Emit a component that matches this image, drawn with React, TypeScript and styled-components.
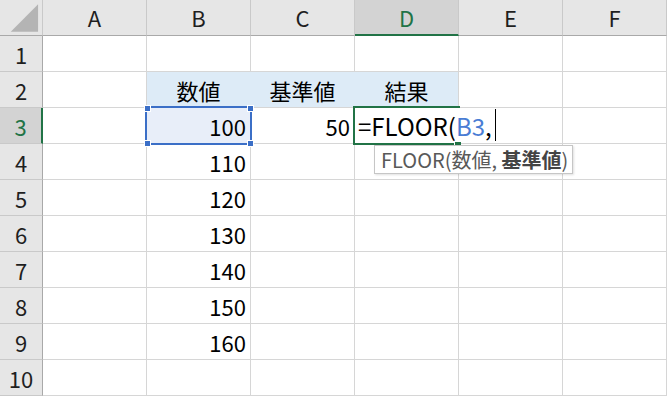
import React from 'react';
import styled, { createGlobalStyle, css } from 'styled-components';

const GlobalStyle = createGlobalStyle`
  html, body {
    margin: 0;
    padding: 0;
    background: #ffffff;
  }
  body {
    font-family: "Noto Sans CJK JP", "Noto Sans", sans-serif;
    overflow: hidden;
  }
`;

const COLS = ['A', 'B', 'C', 'D', 'E', 'F'];
const ROW_COUNT = 10;
const GREEN = '#217346';
const BLUE = '#3b6fc7';
const GRID = '#d6d6d6';
const HEADER_BG = '#e6e6e6';
const HEADER_ACTIVE_BG = '#d3d3d3';
const HEADER_EDGE = '#a9a9a9';
const HEADER_SEP = '#c9c9c9';
const LABEL_FILL = '#ddebf7';
const REF_FILL = '#e8eef9';

type Align = 'left' | 'center' | 'right';

interface CellData {
  text: string;
  align: Align;
}

const cells: Record<string, CellData> = {
  B2: { text: '数値', align: 'center' },
  C2: { text: '基準値', align: 'center' },
  D2: { text: '結果', align: 'center' },
  B3: { text: '100', align: 'right' },
  C3: { text: '50', align: 'right' },
  B4: { text: '110', align: 'right' },
  B5: { text: '120', align: 'right' },
  B6: { text: '130', align: 'right' },
  B7: { text: '140', align: 'right' },
  B8: { text: '150', align: 'right' },
  B9: { text: '160', align: 'right' },
};

// cells with a background fill; internal gridlines between them are hidden
const fills: Record<string, string> = {
  B2: LABEL_FILL,
  C2: LABEL_FILL,
  D2: LABEL_FILL,
  B3: REF_FILL,
};

const Sheet = styled.div`
  position: relative;
  display: grid;
  grid-template-columns: 43px repeat(6, 104px);
  grid-auto-rows: 36px;
  width: 667px;
  height: 396px;
  overflow: hidden;
  background: #ffffff;
  font-size: 22px;
  color: #000000;
`;

const Corner = styled.div`
  box-sizing: border-box;
  background: ${HEADER_BG};
  border-right: 1px solid ${HEADER_SEP};
  border-bottom: 1px solid ${HEADER_EDGE};
  display: flex;
`;

const ColHeader = styled.div<{ $active?: boolean }>`
  box-sizing: border-box;
  display: flex;
  align-items: center;
  justify-content: center;
  background: ${HEADER_BG};
  border-right: 1px solid ${HEADER_SEP};
  border-bottom: 1px solid ${HEADER_EDGE};
  color: #1f1f1f;
  padding-bottom: 1px;
  ${(p) =>
    p.$active &&
    css`
      background: ${HEADER_ACTIVE_BG};
      border-bottom: 2px solid ${GREEN};
      color: ${GREEN};
    `}
`;

const RowHeader = styled.div<{ $active?: boolean }>`
  box-sizing: border-box;
  display: flex;
  align-items: center;
  justify-content: center;
  background: ${HEADER_BG};
  border-right: 1px solid ${HEADER_EDGE};
  border-bottom: 1px solid ${HEADER_SEP};
  color: #1f1f1f;
  ${(p) =>
    p.$active &&
    css`
      background: ${HEADER_ACTIVE_BG};
      border-right: 2px solid ${GREEN};
      color: ${GREEN};
    `}
`;

const Cell = styled.div<{ $align: Align; $fill?: string; $joinRight?: boolean }>`
  box-sizing: border-box;
  display: flex;
  align-items: center;
  justify-content: ${(p) =>
    p.$align === 'right' ? 'flex-end' : p.$align === 'center' ? 'center' : 'flex-start'};
  padding: 0 4px 0 4px;
  background: ${(p) => p.$fill ?? '#ffffff'};
  border-right: 1px solid ${(p) => (p.$joinRight && p.$fill ? p.$fill : GRID)};
  border-bottom: 1px solid ${GRID};
  white-space: nowrap;
`;

/* selection overlays: reference range (blue), active cell with in-cell editor (green) */

const RefRange = styled.div`
  position: absolute;
  left: 145px;
  top: 106px;
  width: 107px;
  height: 39px;
  box-sizing: border-box;
  border: 2px solid ${BLUE};
  pointer-events: none;
`;

const RefHandle = styled.span<{ $right?: boolean; $bottom?: boolean }>`
  position: absolute;
  width: 7px;
  height: 7px;
  box-sizing: border-box;
  background: ${BLUE};
  border: 1px solid #ffffff;
  ${(p) => (p.$right ? 'right: -4px;' : 'left: -3px;')}
  ${(p) => (p.$bottom ? 'bottom: -4px;' : 'top: -3px;')}
`;

const ActiveCell = styled.div`
  position: absolute;
  left: 353px;
  top: 106px;
  width: 107px;
  height: 39px;
  box-sizing: border-box;
  border: 2px solid ${GREEN};
  border-right: none;
`;

const FillHandle = styled.span`
  position: absolute;
  right: -1px;
  bottom: -2px;
  width: 7px;
  height: 6px;
  box-sizing: border-box;
  background: ${GREEN};
  border-left: 1px solid #ffffff;
  border-top: 1px solid #ffffff;
`;

const Editor = styled.div`
  position: absolute;
  left: 355px;
  top: 108px;
  height: 34px;
  box-sizing: border-box;
  display: flex;
  align-items: center;
  padding: 0 6px 0 3px;
  background: #ffffff;
  font-size: 24px;
  color: #000000;
  white-space: nowrap;
`;

const RefText = styled.span`
  color: #4a7dd4;
`;

const Caret = styled.span`
  display: inline-block;
  width: 1px;
  height: 32px;
  margin-left: 3px;
  background: #000000;
`;

const Tip = styled.div`
  position: absolute;
  left: 374px;
  top: 145px;
  width: 199px;
  height: 29px;
  box-sizing: border-box;
  display: flex;
  align-items: center;
  padding: 0 6px;
  background: #ffffff;
  border: 1px solid #c6c6c6;
  box-shadow: 1px 1px 2px rgba(0, 0, 0, 0.12);
  font-size: 20px;
  color: #595959;
  white-space: pre;
`;

const TipArg = styled.b`
  font-weight: 700;
  color: #444444;
`;

export default function App() {
  const rows = Array.from({ length: ROW_COUNT }, (_, i) => i + 1);

  return (
    <>
      <GlobalStyle />
      <Sheet>
        <Corner>
          <svg width="43" height="36" viewBox="0 0 43 36">
            <polygon points="11,32 39,4 39,32" fill="#b4b4b4" />
          </svg>
        </Corner>
        {COLS.map((c) => (
          <ColHeader key={c} $active={c === 'D'}>
            {c}
          </ColHeader>
        ))}

        {rows.map((r) => (
          <React.Fragment key={r}>
            <RowHeader $active={r === 3}>{r}</RowHeader>
            {COLS.map((c, ci) => {
              const id = `${c}${r}`;
              const data = cells[id];
              const next = COLS[ci + 1] ? `${COLS[ci + 1]}${r}` : '';
              return (
                <Cell
                  key={id}
                  $align={data?.align ?? 'left'}
                  $fill={fills[id]}
                  $joinRight={!!fills[next] && fills[next] === fills[id]}
                >
                  {data?.text}
                </Cell>
              );
            })}
          </React.Fragment>
        ))}

        <RefRange>
          <RefHandle />
          <RefHandle $right />
          <RefHandle $bottom />
          <RefHandle $right $bottom />
        </RefRange>

        <ActiveCell>
          <FillHandle />
        </ActiveCell>
        <Editor>
          =FLOOR(<RefText>B3</RefText>,<Caret />
        </Editor>

        <Tip>
          {'FLOOR(数値, '}
          <TipArg>基準値</TipArg>)
        </Tip>
      </Sheet>
    </>
  );
}
